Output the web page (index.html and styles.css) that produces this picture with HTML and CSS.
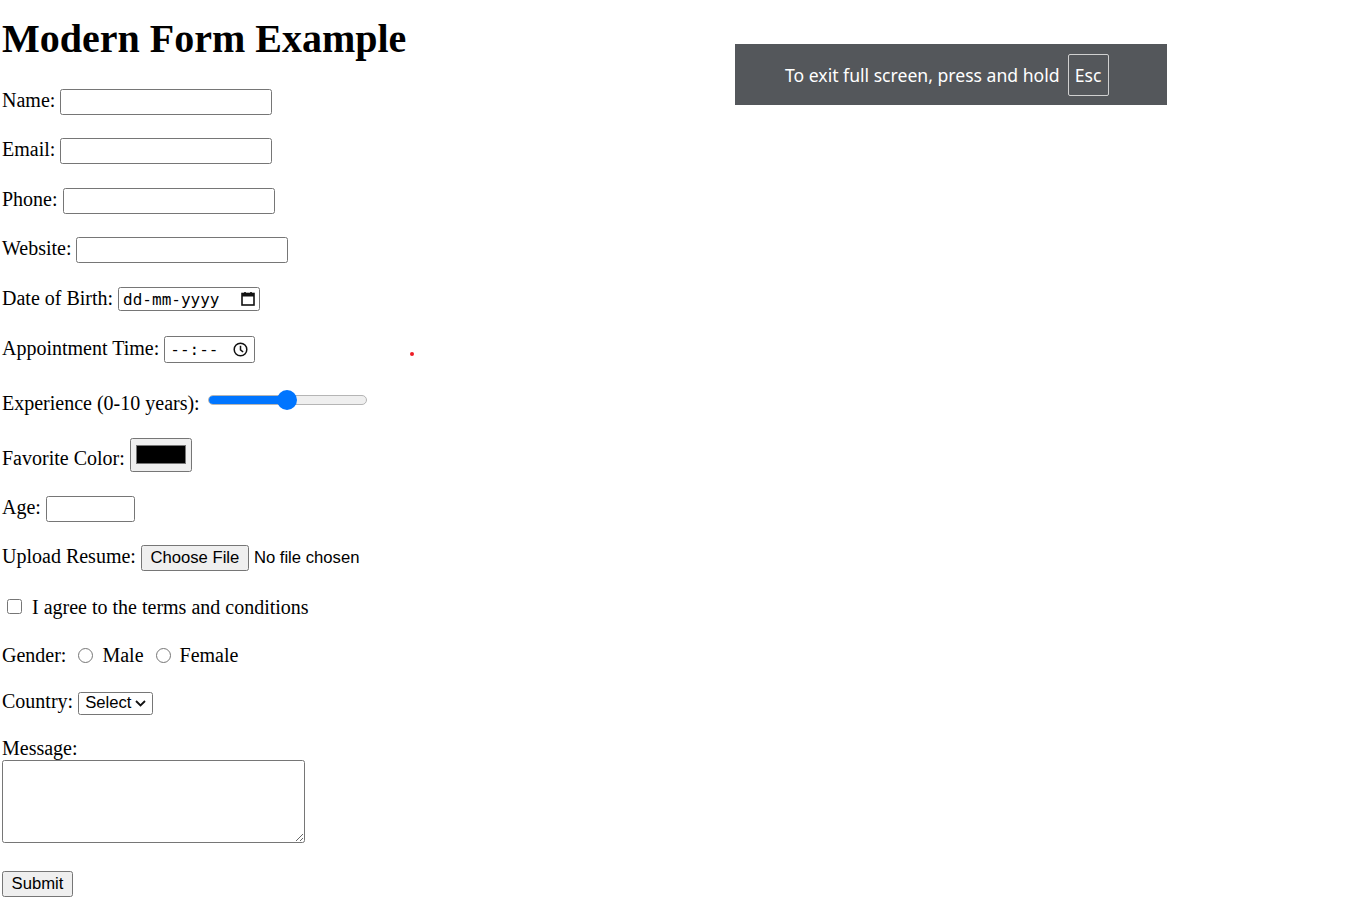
FILE: index.html
```html
<!DOCTYPE html>
<html lang="en">
<head>
<meta charset="utf-8">
<title>Modern Form Example</title>
<link rel="stylesheet" href="styles.css">
</head>
<body>
<h1 class="title">Modern Form Example</h1>
<form class="form">
  <div class="row"><label for="name">Name:</label> <input class="text" id="name" type="text"></div>
  <div class="row"><label for="email">Email:</label> <input class="text" id="email" type="email"></div>
  <div class="row"><label for="phone">Phone:</label> <input class="text" id="phone" type="tel"></div>
  <div class="row"><label for="web">Website:</label> <input class="text" id="web" type="url"></div>
  <div class="row"><label>Date of Birth:</label> <span class="field date"><span class="mono">dd-mm-yyyy</span><svg class="ficon" width="14" height="14" viewBox="0 0 14 14"><rect x="1" y="1.5" width="12" height="11.5" fill="none" stroke="#111" stroke-width="1.6"/><rect x="1" y="1.5" width="12" height="3" fill="#111"/><path d="M4 0v2M10 0v2" stroke="#111" stroke-width="1.6"/></svg></span></div>
  <div class="row"><label>Appointment Time:</label> <span class="field time"><span class="mono">--:--</span><svg class="ficon" width="15" height="15" viewBox="0 0 15 15"><circle cx="7.5" cy="7.5" r="6.3" fill="none" stroke="#111" stroke-width="1.5"/><path d="M7.5 3.8v4l2.6 2.2" fill="none" stroke="#111" stroke-width="1.5"/></svg></span></div>
  <div class="row row-less"><label>Experience (0-10 years):</label> <span class="range"><span class="track"><span class="fill" style="width:50%"></span></span><span class="thumb" style="left:calc(50% - 10px)"></span></span></div>
  <div class="row row-more"><label>Favorite Color:</label> <span class="color"><span class="swatch"></span></span></div>
  <div class="row row-less"><label for="age">Age:</label> <input class="text age" id="age" type="number"></div>
  <div class="row"><label>Upload Resume:</label> <span class="btn choose">Choose File</span><span class="nofile">No file chosen</span></div>
  <div class="row"><input class="check" id="agree" type="checkbox"> <label for="agree">I agree to the terms and conditions</label></div>
  <div class="row row-less"><label>Gender:</label> <input class="radio" type="radio" name="g" id="m"> <label for="m">Male</label> <input class="radio" type="radio" name="g" id="f"> <label for="f">Female</label></div>
  <div class="row row-less"><label>Country:</label> <span class="select">Select<svg class="chev" width="11" height="7" viewBox="0 0 11 7"><path d="M1 1l4.5 4.5L10 1" fill="none" stroke="#111" stroke-width="1.8"/></svg></span></div>
  <div class="msg"><label for="msg">Message:</label></div>
  <textarea class="area" id="msg"></textarea>
  <span class="btn submit">Submit</span>
</form>
<div class="fs-note">To exit full screen, press and hold <span class="esc">Esc</span></div>
<span class="dot"></span>
</body>
</html>
```
FILE: styles.css
```css
html, body { margin: 0; padding: 0; background: #fff; }
body {
  padding-left: 2px;
  font-family: "Liberation Serif", "Times New Roman", serif;
  font-size: 20px;
  color: #000;
}
.title {
  font-size: 40px;
  font-weight: bold;
  line-height: 46px;
  margin: 16px 0 26.8px;
}
.form { margin: 0; }
.row { margin-bottom: 23.45px; line-height: normal; }
.row-less { margin-bottom: 22.45px; }
.row-more { margin-bottom: 24.45px; }
.text {
  box-sizing: border-box;
  width: 212px;
  height: 26px;
  border: 1px solid #767676;
  border-radius: 2.5px;
  padding: 0 3px;
  margin: 0;
  font-family: "Liberation Sans", Arial, sans-serif;
  font-size: 16.67px;
  vertical-align: baseline;
  background: #fff;
}
.age { width: 89px; }
.field {
  box-sizing: border-box;
  display: inline-flex;
  align-items: center;
  border: 1px solid #767676;
  border-radius: 2.5px;
  background: #fff;
}
.mono {
  font-family: "DejaVu Sans Mono", "Liberation Mono", monospace;
  font-size: 16px;
  line-height: 19px;
}
.date { width: 142px; height: 24px; padding: 0 4px; justify-content: space-between; margin-bottom: 1px; }
.time { width: 91px; height: 27px; padding: 0 6px 0 5px; justify-content: space-between; margin: 1px 0 1px; }
.range {
  display: inline-block;
  position: relative;
  width: 159px;
  height: 20px;
  margin: 2.3px 0 0 3px;
}
.track {
  position: absolute;
  left: 0; right: 0; top: 5px;
  height: 10px;
  box-sizing: border-box;
  border: 1px solid #b5b5b5;
  border-radius: 5px;
  background: #efefef;
  overflow: hidden;
}
.fill { display: block; height: 100%; background: #0075ff; }
.thumb {
  position: absolute;
  top: 0;
  width: 20px; height: 20px;
  border-radius: 50%;
  background: #0075ff;
}
.color {
  box-sizing: border-box;
  display: inline-block;
  width: 62px;
  height: 34px;
  padding: 6.5px 5px;
  border: 1px solid #767676;
  border-radius: 2.5px;
  background: #efefef;
  vertical-align: -7px;
}
.swatch {
  display: block;
  box-sizing: border-box;
  width: 50px;
  height: 19px;
  background: #000;
  border: 1px solid #777;
}
.btn {
  box-sizing: border-box;
  display: inline-flex;
  align-items: center;
  justify-content: center;
  height: 26px;
  padding: 0;
  white-space: nowrap;
  border: 1px solid #767676;
  border-radius: 2.5px;
  background: #efefef;
  font-family: "Liberation Sans", Arial, sans-serif;
  font-size: 16.67px;
  line-height: normal;
}
.choose { width: 108px; }
.nofile {
  font-family: "Liberation Sans", Arial, sans-serif;
  font-size: 16.67px;
  margin-left: 5px;
}
.check, .radio {
  -webkit-appearance: none;
  appearance: none;
  box-sizing: border-box;
  display: inline-block;
  width: 15px;
  height: 15px;
  border: 1px solid #767676;
  background: #fff;
  vertical-align: baseline;
  margin-bottom: 0;
}
.check { border-radius: 2.5px; margin: 5px 5px 0 5px; }
.radio { border-radius: 50%; margin: 5.3px 4px 0 7px; }
.select {
  box-sizing: border-box;
  display: inline-flex;
  align-items: center;
  height: 23px;
  width: 75px;
  padding: 0 6px;
  justify-content: space-between;
  border: 1px solid #767676;
  border-radius: 2.5px;
  background: #fff;
  font-family: "Liberation Sans", Arial, sans-serif;
  font-size: 16.67px;
}
.msg { line-height: normal; }
.area {
  display: block;
  box-sizing: border-box;
  width: 303px;
  height: 83px;
  margin: 0 0 28px;
  border: 1px solid #767676;
  border-radius: 2.5px;
  font-family: "Liberation Mono", monospace;
  font-size: 16.67px;
}
.submit { width: 71px; }
.fs-note {
  position: absolute;
  left: 735px;
  top: 44px;
  width: 432px;
  height: 61px;
  box-sizing: border-box;
  padding-left: 50px;
  display: flex;
  align-items: center;
  gap: 8px;
  background: #54575b;
  color: #fff;
  font-family: "Noto Sans", "Open Sans", sans-serif;
  font-size: 17.6px;
}
.esc {
  box-sizing: border-box;
  display: inline-flex;
  align-items: center;
  justify-content: center;
  width: 41px;
  height: 42px;
  border: 1px solid #d0d0d0;
  border-radius: 2px;
}
.dot {
  position: absolute;
  left: 410px;
  top: 352px;
  width: 4px;
  height: 4px;
  border-radius: 50%;
  background: #ee1c25;
}
```
